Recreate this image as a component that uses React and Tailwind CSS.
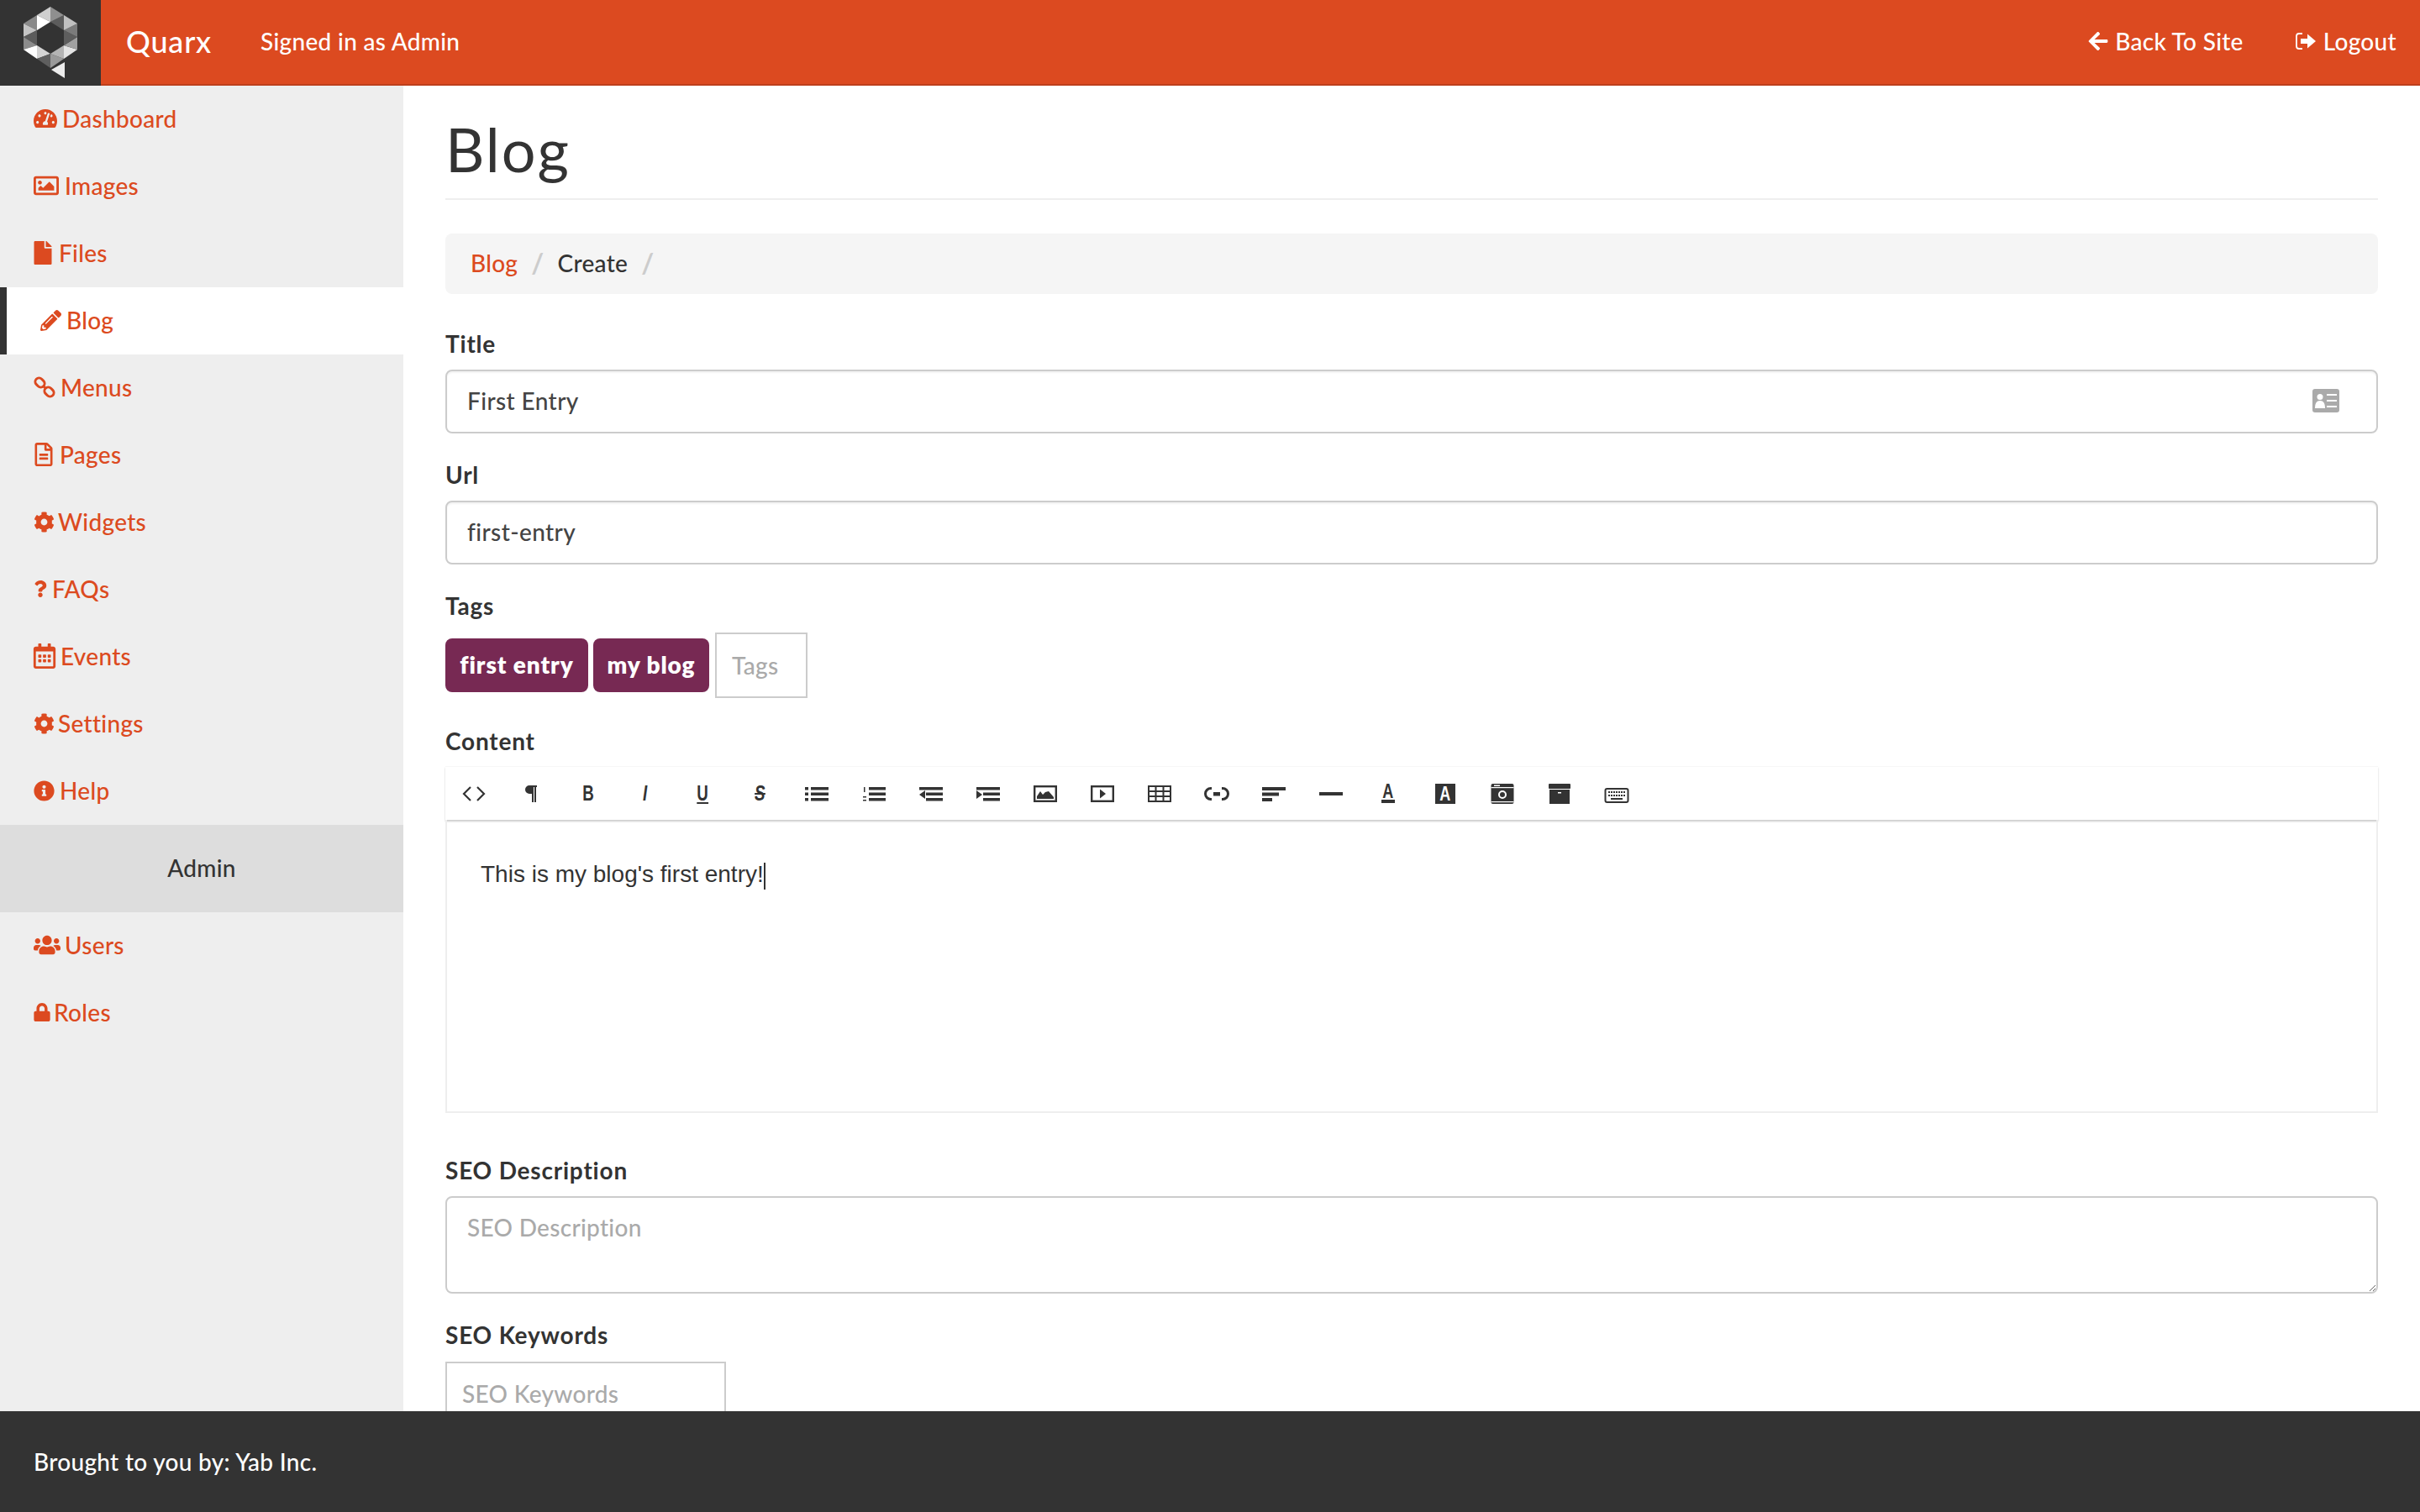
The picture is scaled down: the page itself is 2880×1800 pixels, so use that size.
import {
  FaTachometerAlt,
  FaRegImage,
  FaFile,
  FaPencilAlt,
  FaRegFileAlt,
  FaCog,
  FaQuestion,
  FaRegCalendarAlt,
  FaInfoCircle,
  FaUsers,
  FaLock,
  FaArrowLeft,
} from 'react-icons/fa';

const ChainIcon = ({ size }) => (
  <svg width={size} height={size} viewBox="0 0 26 26" fill="none" stroke="currentColor" strokeWidth="3">
    <rect x="1.500" y="3" width="12" height="9" rx="4.500" transform="rotate(45 7.500 7.500)" />
    <rect x="12.500" y="14" width="12" height="9" rx="4.500" transform="rotate(45 18.500 18.500)" />
    <path d="M11 11l4 4" />
  </svg>
);

const menuTop = [
  { label: 'Dashboard', Icon: FaTachometerAlt, box: 'w-[34px]', size: 28 },
  { label: 'Images', Icon: FaRegImage, box: 'w-[37px]', size: 30 },
  { label: 'Files', Icon: FaFile, box: 'w-[30px]', size: 28, shift: '-ml-[3px]' },
  { label: 'Blog', Icon: FaPencilAlt, box: 'w-[31px]', size: 25, active: true },
  { label: 'Menus', Icon: ChainIcon, box: 'w-[32px]', size: 26 },
  { label: 'Pages', Icon: FaRegFileAlt, box: 'w-[31px]', size: 28, shift: '-ml-[2px]' },
  { label: 'Widgets', Icon: FaCog, box: 'w-[29px]', size: 25 },
  { label: 'FAQs', Icon: FaQuestion, box: 'w-[22px]', size: 20, shift: '-ml-[2px]' },
  { label: 'Events', Icon: FaRegCalendarAlt, box: 'w-[32px]', size: 30, shift: '-ml-[2px]' },
  { label: 'Settings', Icon: FaCog, box: 'w-[29px]', size: 25 },
  { label: 'Help', Icon: FaInfoCircle, box: 'w-[31px]', size: 25 },
];

const menuAdmin = [
  { label: 'Users', Icon: FaUsers, box: 'w-[37px]', size: 32 },
  { label: 'Roles', Icon: FaLock, box: 'w-[24px]', size: 22, shift: '-ml-[1px]' },
];

const triangles = [
  ['60,7 44,17 60,25', '#cfcfcf'],
  ['44,17 44,35 60,25', '#ffffff'],
  ['28,27 44,17 44,35', '#8a8a8a'],
  ['28,27 44,35 28,43', '#c4c4c4'],
  ['28,43 44,35 44,53', '#5c5c5c'],
  ['28,43 28,58 44,53', '#8c8c8c'],
  ['28,58 44,53 44,69', '#ffffff'],
  ['44,53 44,69 60,63', '#d4d4d4'],
  ['44,69 60,80 60,63', '#5f5f5f'],
  ['60,63 60,80 76,69', '#9a9a9a'],
  ['60,63 76,53 76,69', '#b4b4b4'],
  ['76,53 76,69 92,58', '#e4e4e4'],
  ['76,53 92,58 92,43', '#a0a0a0'],
  ['76,35 76,53 92,43', '#5e5e5e'],
  ['76,35 92,27 92,43', '#7b7b7b'],
  ['76,17 92,27 76,35', '#c0c0c0'],
  ['60,25 76,35 76,17', '#5c5c5c'],
  ['60,7 76,17 60,25', '#8f8f8f'],
  ['61,82 77,73 77,92', '#ececec'],
];

const Logo = () => (
  <svg width="120" height="100" viewBox="0 0 120 100">
    {triangles.map(([points, fill]) => (
      <polygon key={points} points={points} fill={fill} />
    ))}
  </svg>
);

const Bars = ({ rows }) => (
  <svg width="30" height="30" viewBox="0 0 30 30" fill="#333">
    {rows.map(([x, y, w, h], i) => (
      <rect key={i} x={x} y={y} width={w} height={h} />
    ))}
  </svg>
);

const Svg = ({ children }) => (
  <svg width="30" height="30" viewBox="0 0 30 30" fill="#333">
    {children}
  </svg>
);

const Letter = ({ className, children }) => (
  <span className={`scale-x-75 font-['Liberation_Sans',sans-serif] text-[25px] leading-none font-bold text-[#333] ${className}`}>
    {children}
  </span>
);

const toolbar = [
  <Svg key="code">
    <path d="M11 7 3 15l8 8M19 7l8 8-8 8" fill="none" stroke="#333" strokeWidth="2.2" />
  </Svg>,
  <Svg key="para">
    <path d="M13 5h9v2h-1v18h-2V7h-1v18h-2V15h-3a5 5 0 0 1 0-10z" />
  </Svg>,
  <Letter key="b">B</Letter>,
  <Letter key="i" className="italic">I</Letter>,
  <Letter key="u" className="underline">U</Letter>,
  <Letter key="s" className="italic line-through">S</Letter>,
  <Bars key="ul" rows={[[1, 7, 4, 3.500], [8, 7, 21, 3.500], [1, 13.500, 4, 3.500], [8, 13.500, 21, 3.500], [1, 20, 4, 3.500], [8, 20, 21, 3.500]]} />,
  <Svg key="ol">
    <rect x="9" y="7" width="20" height="3.500" />
    <rect x="9" y="13.500" width="20" height="3.500" />
    <rect x="9" y="20" width="20" height="3.500" />
    <rect x="3" y="7" width="1.500" height="6" />
    <rect x="2" y="18" width="4" height="1.500" />
    <rect x="2" y="22" width="4" height="1.500" />
  </Svg>,
  <Svg key="outdent">
    <rect x="1" y="7" width="28" height="3.500" />
    <rect x="9" y="13.500" width="20" height="3.500" />
    <rect x="9" y="20" width="20" height="3.500" />
    <path d="M8 11v10l-7-5z" />
  </Svg>,
  <Svg key="indent">
    <rect x="1" y="7" width="28" height="3.500" />
    <rect x="9" y="13.500" width="20" height="3.500" />
    <rect x="9" y="20" width="20" height="3.500" />
    <path d="M1 11v10l7-5z" />
  </Svg>,
  <Svg key="image">
    <rect x="2.200" y="6.200" width="25.600" height="17.600" fill="none" stroke="#333" strokeWidth="2.400" />
    <path d="M5 21v-3l4-6 3 4 3-3 4-1 6 7v2z" />
  </Svg>,
  <Svg key="video">
    <rect x="2.200" y="6.200" width="25.600" height="17.600" fill="none" stroke="#333" strokeWidth="2.400" />
    <path d="M12 9.500v11l7-5.500z" />
  </Svg>,
  <Svg key="table">
    <rect x="2" y="6" width="26" height="18" fill="none" stroke="#333" strokeWidth="2" />
    <path d="M10.500 6v18M19.500 6v18M2 12h26M2 18h26" fill="none" stroke="#333" strokeWidth="2" />
  </Svg>,
  <Svg key="link">
    <path d="M9 8.500H8a6.500 6.500 0 0 0 0 13h1M21 8.500h1a6.500 6.500 0 0 1 0 13h-1" fill="none" stroke="#333" strokeWidth="3" />
    <rect x="11" y="13" width="8" height="4.500" />
  </Svg>,
  <Bars key="align" rows={[[1, 7, 28, 4], [1, 13.500, 20, 4], [1, 20, 12, 4]]} />,
  <Bars key="hr" rows={[[1, 13, 28, 4]]} />,
  <span key="fore" className="flex flex-col items-center font-['Liberation_Sans',sans-serif] leading-none font-bold text-[#333]">
    <span className="mb-[1px] scale-x-75 text-[24px] leading-[18px]">A</span>
    <span className="h-[4px] w-[16px] bg-[#333]" />
  </span>,
  <span key="back" className="flex h-[24px] w-[24px] items-center justify-center bg-[#333] font-['Liberation_Sans',sans-serif] font-bold text-white">
    <span className="scale-x-75 text-[24px] leading-none">A</span>
  </span>,
  <Svg key="camera">
    <rect x="1.500" y="3" width="27" height="24" rx="2" />
    <rect x="5" y="4.500" width="7" height="1.500" fill="#fff" />
    <rect x="1.500" y="7" width="27" height="1.200" fill="#fff" />
    <rect x="1.500" y="24" width="27" height="1.200" fill="#fff" />
    <circle cx="15" cy="16" r="4" fill="none" stroke="#fff" strokeWidth="2" />
  </Svg>,
  <Svg key="archive">
    <rect x="2" y="3" width="26" height="6" rx="1" />
    <path d="M3 10h24v17H3z" />
    <rect x="13" y="13" width="4" height="1.500" fill="#fff" />
  </Svg>,
  <Svg key="keyboard">
    <rect x="1.500" y="9" width="27" height="16" rx="2" fill="none" stroke="#333" strokeWidth="2" />
    <path d="M5 13h20M5 17h20" fill="none" stroke="#333" strokeWidth="2" strokeDasharray="2 1" />
    <rect x="8" y="20" width="14" height="2" />
  </Svg>,
];

const SignOutIcon = () => (
  <svg width="24" height="20" viewBox="0 0 24 20" fill="currentColor">
    <path d="M8 1H4a3 3 0 0 0-3 3v12a3 3 0 0 0 3 3h4" fill="none" stroke="currentColor" strokeWidth="1.800" />
    <path d="M14 1.500 24 10l-10 8.500V13H6V7h8z" />
  </svg>
);

const CardIcon = () => (
  <svg width="32" height="28" viewBox="0 0 32 28" className="absolute top-[23px] right-[46px]">
    <rect width="32" height="28" rx="3" fill="#aaa" />
    <circle cx="9" cy="9.500" r="3.500" fill="#fff" />
    <path d="M3 23c0-6 2-9 6-9s6 3 6 9z" fill="#fff" />
    <path d="M17 6h12v2H17zM17 13h12v2H17zM17 20h12v2H17z" fill="#fff" />
  </svg>
);

const Label = ({ className = '', children }) => (
  <label className={`block h-[40px] text-[28px] leading-[38px] font-bold tracking-[0.8px] text-[#333] ${className}`}>{children}</label>
);

const textInput =
  'block h-[76px] w-full rounded-lg border-2 border-[#ccc] px-[24px] pb-[2px] text-[28px] tracking-[0.4px] text-[#444] shadow-[inset_0_2px_2px_rgba(0,0,0,0.05)] outline-none';

const tagClass = 'flex h-[64px] items-center justify-center rounded-lg bg-[#772953] pb-[2px] text-[28px] font-extrabold tracking-[0.9px] text-white';

const NavRow = ({ item }) => {
  const { label, Icon, box, size, active, shift = '' } = item;
  return (
    <a
      className={`flex h-[80px] items-center pb-[2px] text-[28px] text-[#dc4a20] ${
        active ? 'border-l-[8px] border-[#333] bg-white pl-[40px]' : 'pl-[40px]'
      }`}
    >
      <span className={`flex shrink-0 items-center ${box}`}>
        <span className={`flex ${shift}`}>
          <Icon size={size} />
        </span>
      </span>
      {label}
    </a>
  );
};

export default function App() {
  return (
    <div className="flex h-screen flex-col overflow-hidden bg-white font-['Lato',sans-serif] font-medium tracking-[0.3px] text-[#333]">
      <header className="flex h-[102px] shrink-0 items-stretch bg-[#dc4a20] text-[28px] text-white">
        <div className="flex w-[120px] items-center bg-[#333]">
          <Logo />
        </div>
        <div className="flex flex-1 items-center border-b-2 border-[#bd3f1c] pb-[2px]">
          <span className="ml-[30px] text-[36px] tracking-[0.8px]">Quarx</span>
          <span className="ml-[58px]">Signed in as Admin</span>
          <div className="ml-auto flex items-center gap-[62px] pr-[28px]">
            <a className="flex items-center gap-[7px]">
              <FaArrowLeft size={26} />
              Back To Site
            </a>
            <a className="flex items-center gap-[9px]">
              <SignOutIcon />
              Logout
            </a>
          </div>
        </div>
      </header>

      <div className="flex min-h-0 flex-1">
        <aside className="w-[480px] shrink-0 bg-[#eee]">
          {menuTop.map((item) => (
            <NavRow key={item.label} item={item} />
          ))}
          <div className="flex h-[104px] items-center justify-center bg-[#ddd] pb-[2px] text-[28px] text-[#333]">Admin</div>
          {menuAdmin.map((item) => (
            <NavRow key={item.label} item={item} />
          ))}
        </aside>

        <main className="min-w-0 flex-1 overflow-hidden px-[50px]">
          <h1 className="flex h-[136px] items-center border-b-2 border-[#eee] pt-[16px] text-[72px] leading-none font-normal tracking-[2px]">
            Blog
          </h1>

          <nav className="mt-[40px] mb-[40px] flex h-[72px] items-center rounded-lg bg-[#f5f5f5] px-[30px] pb-[2px] text-[28px]">
            <a className="text-[#dc4a20]">Blog</a>
            <span className="mx-[16px] text-[32px] font-bold text-[#ccc]">/</span>
            <span>Create</span>
            <span className="mx-[16px] text-[32px] font-bold text-[#ccc]">/</span>
          </nav>

          <Label className="mb-[10px]">Title</Label>
          <div className="relative">
            <input readOnly value="First Entry" className={textInput} />
            <CardIcon />
          </div>

          <Label className="mt-[30px] mb-[10px]">Url</Label>
          <input readOnly value="first-entry" className={textInput} />

          <Label className="mt-[30px] mb-[11px]">Tags</Label>
          <div className="flex h-[78px] items-center">
            <span className={`w-[170px] ${tagClass}`}>first entry</span>
            <span className={`ml-[6px] w-[138px] ${tagClass}`}>my blog</span>
            <input
              readOnly
              placeholder="Tags"
              className="ml-[7px] h-[78px] w-[110px] border-2 border-[#ccc] px-[18px] text-[28px] outline-none placeholder:text-[#aaa]"
            />
          </div>

          <Label className="mt-[32px] mb-[9px]">Content</Label>
          <div className="flex h-[64px] items-center border-t border-[#f7f7f7] bg-white shadow-[0_2px_2px_rgba(0,0,0,0.2)]">
            {toolbar.map((icon, i) => (
              <span key={i} className="flex h-full w-[68px] items-center justify-center">
                {icon}
              </span>
            ))}
          </div>
          <div className="h-[349px] border-x-2 border-b-2 border-[#eee] px-[40px] pt-[46px] font-['Liberation_Sans',sans-serif] text-[28px] leading-[38px] font-normal tracking-normal text-[#333]">
            This is my blog's first entry!<span className="inline-block h-[32px] w-[2px] bg-[#333] align-middle" />
          </div>

          <Label className="mt-[49px] mb-[10px]">SEO Description</Label>
          <textarea
            readOnly
            placeholder="SEO Description"
            className="block h-[116px] w-full rounded-lg border-2 border-[#ccc] px-[24px] py-[14px] text-[28px] outline-none placeholder:text-[#aaa]"
          />

          <Label className="mt-[30px] mb-[11px]">SEO Keywords</Label>
          <input
            readOnly
            placeholder="SEO Keywords"
            className="block h-[78px] w-[334px] border-2 border-[#ccc] px-[18px] pb-[2px] text-[28px] outline-none placeholder:text-[#aaa]"
          />
        </main>
      </div>

      <footer className="flex h-[120px] shrink-0 items-center bg-[#333] pl-[40px] text-[28px] text-white">
        Brought to you by: Yab Inc.
      </footer>
    </div>
  );
}
